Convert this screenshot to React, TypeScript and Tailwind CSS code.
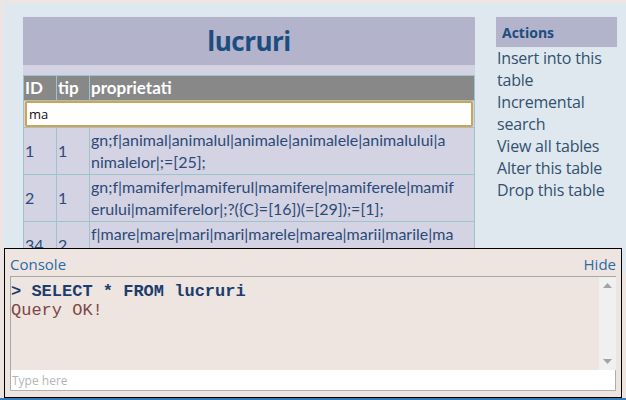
type Row = {
  id: number;
  tip: number;
  lines: string[];
};

// liniile sunt rupte exact ca in tabel (break-all)
const rows: Row[] = [
  { id: 1, tip: 1, lines: ["gn;f|animal|animalul|animale|animalele|animalului|a", "nimalelor|;=[25];"] },
  { id: 2, tip: 1, lines: ["gn;f|mamifer|mamiferul|mamifere|mamiferele|mamif", "erului|mamiferelor|;?({C}=[16])(=[29]);=[1];"] },
  { id: 34, tip: 2, lines: ["f|mare|mare|mari|mari|marele|marea|marii|marile|ma", "ri;"] },
];

const actions = ["Insert into this", "table", "Incremental", "search", "View all tables", "Alter this table", "Drop this table"];

export default function App() {
  return (
    <div className="h-[400px] overflow-hidden bg-[#efe5e0] pt-[3px] pl-[3px] font-['Open_Sans',sans-serif] relative">
      <div className="h-[270px] bg-[#dfe8ef] flex gap-[21px] pl-[20px] pt-[14px]">
        {/* tabel principal */}
        <div className="w-[452px] shrink-0">
          <div className="h-[48px] bg-[#b3b3cb] flex items-center justify-center">
            <h1 className="text-[26px] font-bold text-[#1b4d80] tracking-[-0.5px]">lucruri</h1>
          </div>
          <div className="h-[10px] bg-[#d3d3e3]" />
          <table className="w-full border-collapse text-[16px] leading-[22px] font-['Lato',sans-serif]">
            <thead>
              <tr className="bg-[#888888] text-white">
                <th className="w-[33px] h-[25px] border border-[#9cc4cc] px-[1px] text-left font-bold text-[17px]">ID</th>
                <th className="w-[33px] border border-[#9cc4cc] px-[1px] text-left font-bold text-[17px]">tip</th>
                <th className="border border-[#9cc4cc] px-[1px] text-left font-bold text-[17px]">proprietati</th>
              </tr>
            </thead>
            <tbody>
              <tr className="bg-[#d3d3e3]">
                <td colSpan={3} className="border border-[#9cc4cc] p-0 h-[27px]">
                  <div className="h-[26px] bg-white border-2 border-[#d4a24c] rounded-[2px] mx-[1px] flex items-center px-[2px] text-[13px] text-[#111] font-['Open_Sans',sans-serif]">
                    ma
                  </div>
                </td>
              </tr>
              {rows.map((r) => (
                <tr key={r.id} className="bg-[#d3d3e3] text-[#2c4a78]">
                  <td className="border border-[#9cc4cc] px-[1px] py-[1px] align-middle">{r.id}</td>
                  <td className="border border-[#9cc4cc] px-[1px] py-[1px] align-middle">{r.tip}</td>
                  <td className="border border-[#9cc4cc] px-[1px] py-[1px]">
                    {r.lines.map((l) => (
                      <div key={l} className="whitespace-nowrap">{l}</div>
                    ))}
                  </td>
                </tr>
              ))}
            </tbody>
          </table>
        </div>

        {/* bara laterala */}
        <div className="w-[121px] shrink-0">
          <div className="h-[30px] bg-[#b3b3cb] flex items-center px-[6px] text-[14px] font-bold text-[#1b4d80]">Actions</div>
          <ul className="pl-[1px] text-[16px] leading-[22px] text-[#34506e] tracking-[-0.2px]">
            {actions.map((a) => (
              <li key={a} className="whitespace-nowrap">{a}</li>
            ))}
          </ul>
        </div>
      </div>

      {/* consola */}
      <div className="absolute left-[4px] right-[4px] top-[248px] h-[150px] border border-black bg-[#efe5e0] px-[5px]">
        <div className="h-[28px] flex items-end justify-between text-[15px] text-[#2b6ba3] border-b border-[#a8a8a8] pb-[1px]">
          <span>Console</span>
          <span>Hide</span>
        </div>
        <div className="h-[93px] border-l border-[#a8a8a8] flex">
          <div className="flex-1 pt-[5px] font-['Liberation_Mono',monospace] text-[17px] leading-[19px]">
            <div className="font-bold text-[#1c3d6e]">&gt; SELECT * FROM lucruri</div>
            <div className="text-[#7d4646]">Query OK!</div>
          </div>
          <div className="w-[17px] bg-[#f0f0f0] flex flex-col items-center justify-between py-[5px]">
            <svg width="9" height="6" viewBox="0 0 9 6"><path d="M0 6 L4.5 1 L9 6 Z" fill="#a3a3a3" /></svg>
            <svg width="9" height="6" viewBox="0 0 9 6"><path d="M0 0 L4.5 5 L9 0 Z" fill="#a3a3a3" /></svg>
          </div>
        </div>
        <input
          className="block w-full h-[21px] bg-white border border-[#b0b0b0] border-t-0 px-[1px] text-[12px] outline-none placeholder:text-[#b5b5b5]"
          placeholder="Type here"
        />
      </div>
      <div className="absolute left-0 right-0 bottom-0 h-[2px] bg-[#3b78b8]" />
    </div>
  );
}
